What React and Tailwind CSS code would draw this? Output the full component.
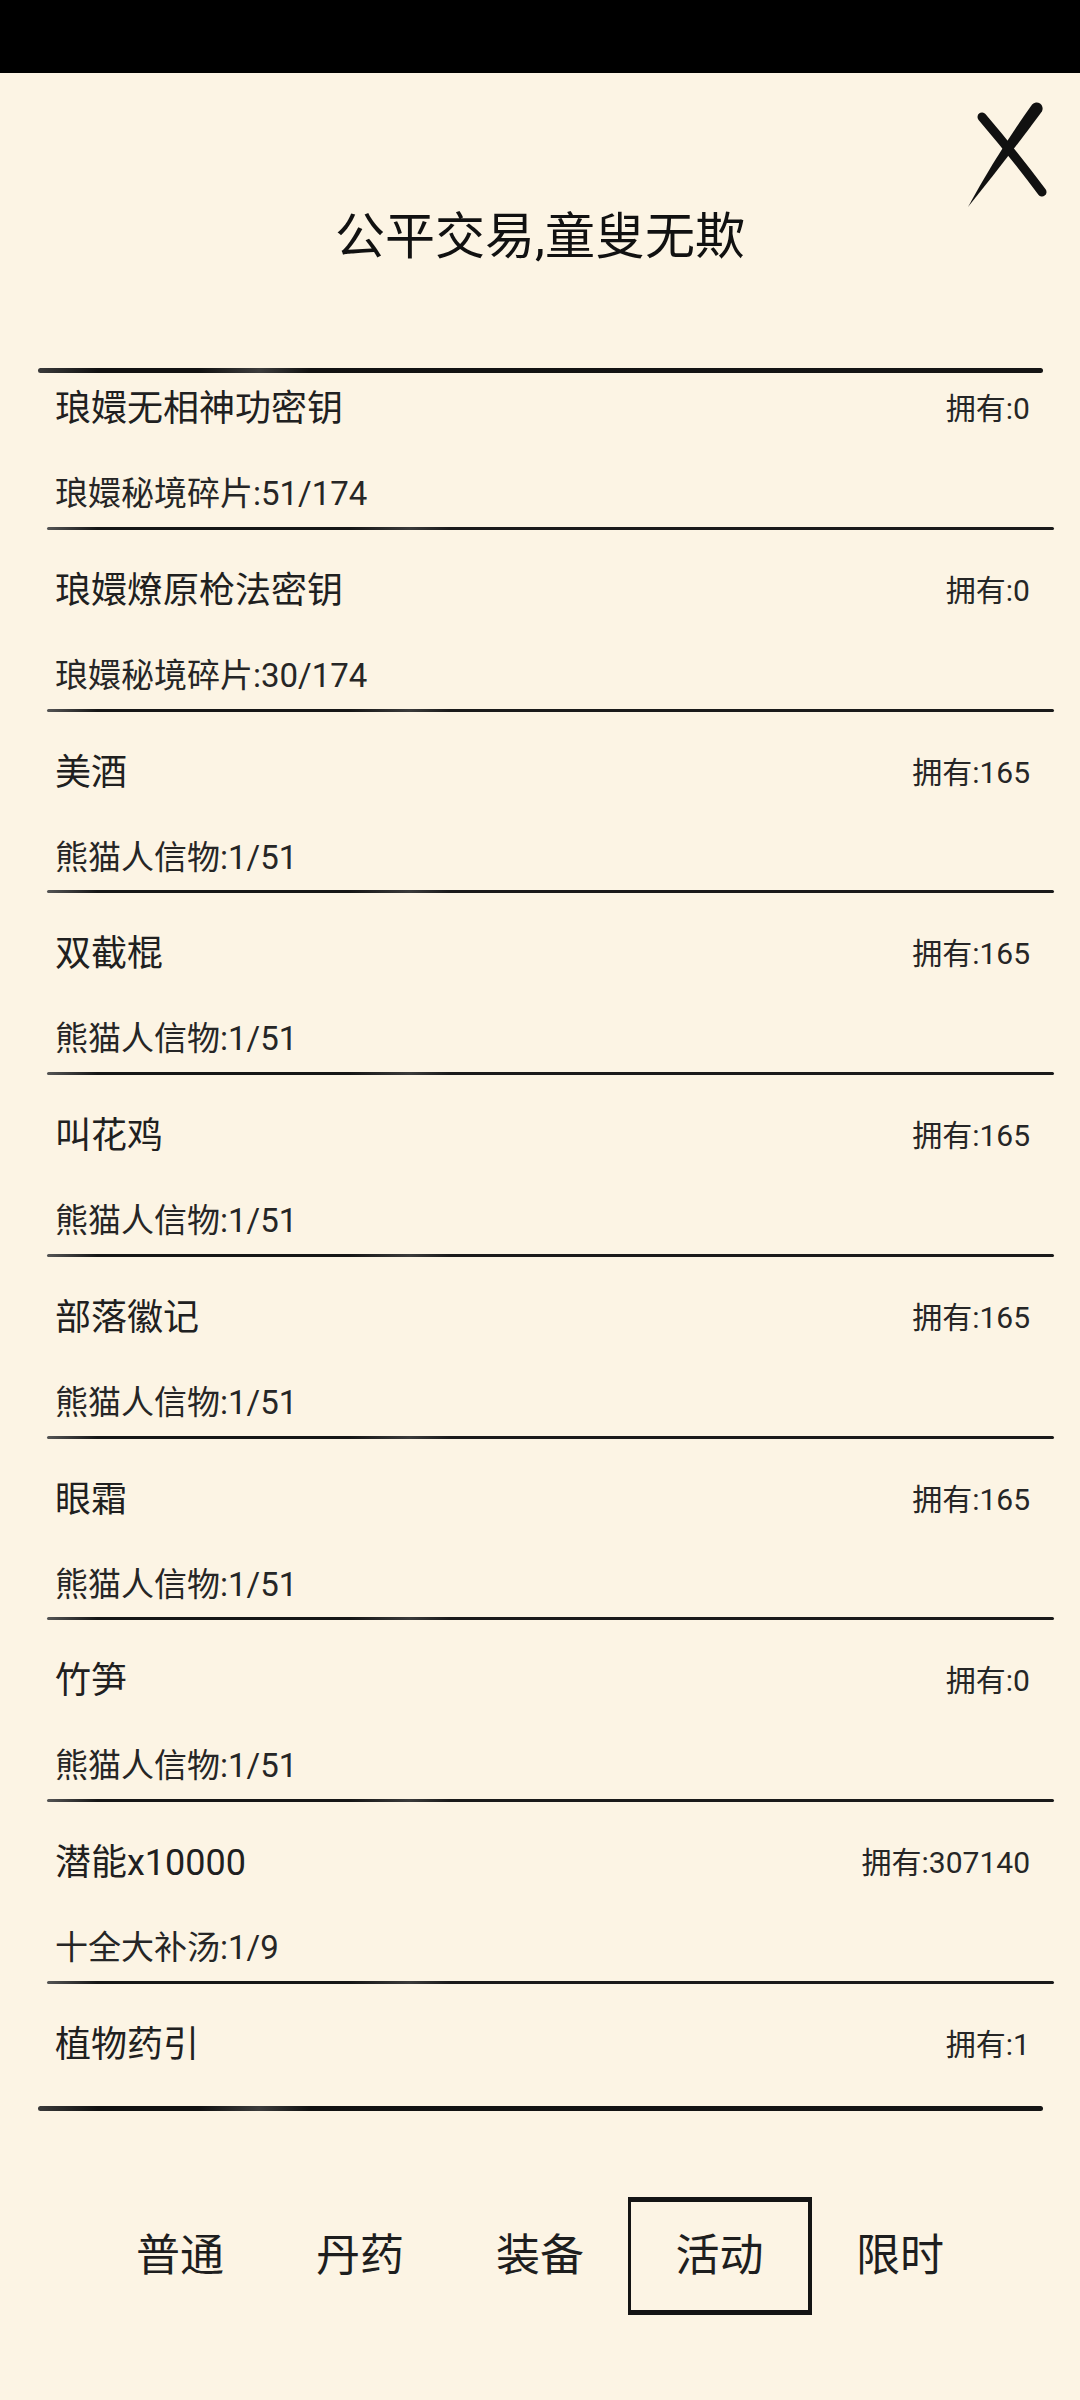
import React from 'react';

const items = [
  { name: '琅嬛无相神功密钥', cost: '琅嬛秘境碎片:51/174', owned: '拥有:0' },
  { name: '琅嬛燎原枪法密钥', cost: '琅嬛秘境碎片:30/174', owned: '拥有:0' },
  { name: '美酒', cost: '熊猫人信物:1/51', owned: '拥有:165' },
  { name: '双截棍', cost: '熊猫人信物:1/51', owned: '拥有:165' },
  { name: '叫花鸡', cost: '熊猫人信物:1/51', owned: '拥有:165' },
  { name: '部落徽记', cost: '熊猫人信物:1/51', owned: '拥有:165' },
  { name: '眼霜', cost: '熊猫人信物:1/51', owned: '拥有:165' },
  { name: '竹笋', cost: '熊猫人信物:1/51', owned: '拥有:0' },
  { name: '潜能x10000', cost: '十全大补汤:1/9', owned: '拥有:307140' },
  { name: '植物药引', cost: null, owned: '拥有:1' },
];

const tabs = ['普通', '丹药', '装备', '活动', '限时'];

const CloseMark = () => (
  <svg viewBox="0 0 90 115" className="absolute left-[960px] top-[27px] w-[90px] h-[115px]">
    <path d="M22 17 Q52 52 82 92" stroke="#111" strokeWidth="9" strokeLinecap="round" fill="none" />
    <path d="M72.1 4.6 A6 6 0 0 1 81.9 11.4 Q46 60 8 107 Q38 52 72.1 4.6 Z" fill="#111" />
  </svg>
);

const ThickLine = () => (
  <div className="ml-[38px] w-[1005px] h-[5px] shrink-0 rounded-full bg-[linear-gradient(90deg,#3a3a3a_0%,#111_6%,#111_16%,#3c3c3c_22%,#111_27%,#151515_100%)]" />
);

const RowLine = () => (
  <div className="mt-auto ml-[47px] w-[1007px] h-[3px] rounded-full bg-[linear-gradient(90deg,#555_0%,#161616_5%,#161616_30%,#3a3a3a_36%,#1a1a1a_40%,#1a1a1a_100%)]" />
);

const ItemRow = ({ item }) => (
  <div className="h-[181.75px] flex flex-col shrink-0">
    <div className="pt-[43px] pl-[55px] pr-[50px] flex justify-between items-center h-[79px]">
      <span className="text-[36px] leading-[36px] text-[#202020]">{item.name}</span>
      <span className="text-[30px] leading-[30px] text-[#262626]">{item.owned}</span>
    </div>
    {item.cost && (
      <div className="mt-[50px] pl-[55px] text-[33px] leading-[33px] text-[#262626]">{item.cost}</div>
    )}
    <RowLine />
  </div>
);

export default function App() {
  return (
    <div className="w-[1080px] h-[2400px] bg-[#fcf4e4] flex flex-col overflow-hidden font-['Roboto','Noto_Sans_CJK_SC',sans-serif]">
      <div className="h-[73px] bg-black shrink-0" />

      <div className="relative h-[295px] shrink-0 pt-[139px] text-center">
        <h1 className="text-[50px] leading-[50px] text-[#111]">公平交易,童叟无欺</h1>
        <CloseMark />
      </div>

      <ThickLine />

      <div className="h-[1733px] overflow-hidden shrink-0">
        <div className="-mt-[25px] flex flex-col">
          {items.map((item, i) => (
            <ItemRow key={i} item={item} />
          ))}
        </div>
      </div>

      <ThickLine />

      <div className="mt-[86px] h-[118px] px-[90px] grid grid-cols-5 shrink-0">
        {tabs.map((tab, i) => (
          <div key={tab} className="flex justify-center items-center">
            {i === 3 ? (
              <div className="w-[184px] h-[118px] shrink-0 flex items-center justify-center border-[#141414] border-t-[5px] border-b-[5px] border-l-[3px] border-r-[4px]">
                <span className="text-[44px] leading-[44px] text-[#1e1e1e]">{tab}</span>
              </div>
            ) : (
              <span className="text-[44px] leading-[44px] text-[#1e1e1e]">{tab}</span>
            )}
          </div>
        ))}
      </div>
    </div>
  );
}
